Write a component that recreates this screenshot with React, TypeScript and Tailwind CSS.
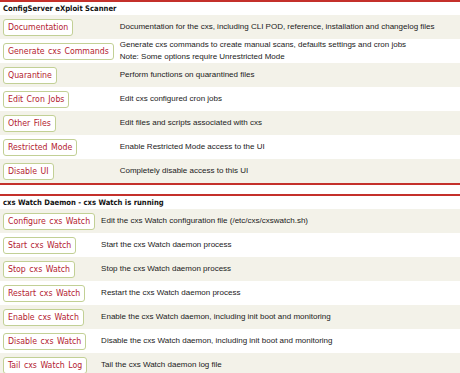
import React from "react";

const sec1: [string, React.ReactNode][] = [
  ["Documentation", "Documentation for the cxs, including CLI POD, reference, installation and changelog files"],
  [
    "Generate cxs Commands",
    <>
      Generate cxs commands to create manual scans, defaults settings and cron jobs
      <br />
      Note: Some options require Unrestricted Mode
    </>,
  ],
  ["Quarantine", "Perform functions on quarantined files"],
  ["Edit Cron Jobs", "Edit cxs configured cron jobs"],
  ["Other Files", "Edit files and scripts associated with cxs"],
  ["Restricted Mode", "Enable Restricted Mode access to the UI"],
  ["Disable UI", "Completely disable access to this UI"],
];

const sec2: [string, string][] = [
  ["Configure cxs Watch", "Edit the cxs Watch configuration file (/etc/cxs/cxswatch.sh)"],
  ["Start cxs Watch", "Start the cxs Watch daemon process"],
  ["Stop cxs Watch", "Stop the cxs Watch daemon process"],
  ["Restart cxs Watch", "Restart the cxs Watch daemon process"],
  ["Enable cxs Watch", "Enable the cxs Watch daemon, including init boot and monitoring"],
  ["Disable cxs Watch", "Disable the cxs Watch daemon, including init boot and monitoring"],
  ["Tail cxs Watch Log", "Tail the cxs Watch daemon log file"],
];

const btnFont = { fontFamily: '"DejaVu Sans Condensed", "DejaVu Sans", sans-serif' };

function Rows({ rows }: { rows: [string, React.ReactNode][] }) {
  return (
    <table className="w-full border-collapse">
      <tbody>
        {rows.map(([b, d], i) => (
          <tr key={b} className={i % 2 === 0 ? "h-[24px] bg-[#f3f2e9]" : "h-[24px] bg-white"}>
            <td className="pl-[3px] pr-[6px] py-0 align-middle whitespace-nowrap w-[1%]">
              <span
                className="flex h-[17px] items-center rounded-[3px] border border-[#c2d095] bg-white px-[4px] text-[8.7px] leading-[15px] [word-spacing:1px] text-[#b3212f] whitespace-nowrap w-max"
                style={btnFont}
              >
                {b}
              </span>
            </td>
            <td className="p-0 align-middle text-[8px] leading-[12px] text-[#1a1a1a]" style={{ fontFamily: '"Liberation Sans", Arial, sans-serif' }}>
              {d}
            </td>
          </tr>
        ))}
      </tbody>
    </table>
  );
}

export default function App() {
  return (
    <div className="w-[460px] h-[373px] overflow-hidden bg-white">
      <div className="border-t-2 border-b-2 border-[#c4302b]">
        <div
          className="h-[13px] pl-[3px] text-[7.6px] font-bold leading-[13px] text-[#111]"
          style={btnFont}
        >
          ConfigServer eXploit Scanner
        </div>
        <Rows rows={sec1} />
      </div>
      <div className="mt-[9px] border-t-2 border-[#c4302b]">
        <div
          className="h-[13px] pl-[3px] text-[7.6px] font-bold leading-[13px] text-[#111]"
          style={btnFont}
        >
          cxs Watch Daemon - cxs Watch is running
        </div>
        <Rows rows={sec2} />
      </div>
    </div>
  );
}
